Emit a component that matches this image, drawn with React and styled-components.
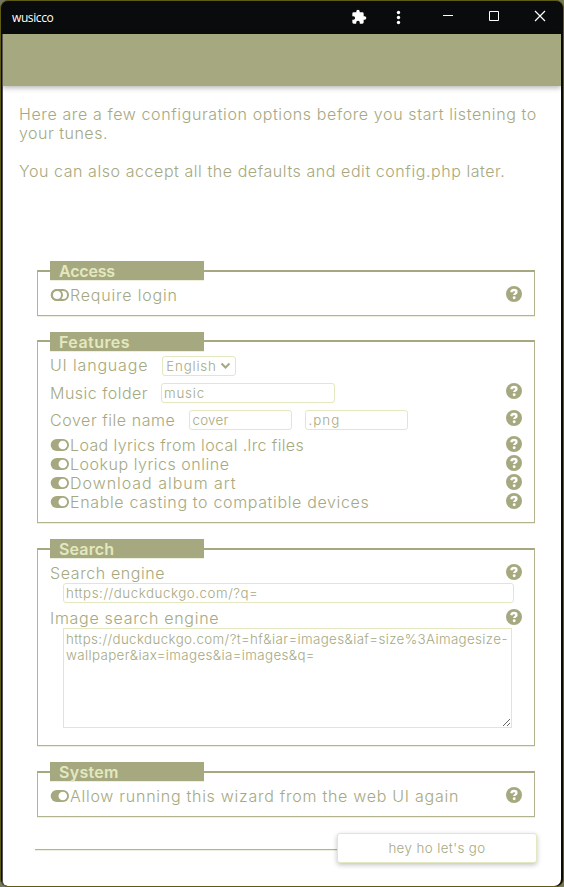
import React from "react";
import styled, { createGlobalStyle } from "styled-components";

const OLIVE = "#a6a97f";
const PALE = "#e4e8c0";

const Global = createGlobalStyle`
  * { box-sizing: border-box; }
  html, body { margin: 0; background: #77795f; overflow: hidden; }
  body, input, select, textarea, button { font-family: Inter, "Open Sans", sans-serif; font-weight: 300; color: ${OLIVE}; }
`;

const Window = styled.div`
  width: 564px;
  height: 887px;
  display: flex;
  flex-direction: column;
  border: 1px solid #5f5a14;
  border-radius: 8px;
  background: #0a0b0d;
  padding: 0 2px 0 1px;
  overflow: hidden;
`;

const TitleBar = styled.header`
  height: 33px;
  flex: none;
  display: flex;
  align-items: center;
  justify-content: space-between;
  padding: 0 11px 0 10px;
  color: #fff;
`;

const AppName = styled.span`
  font: 400 12px "Open Sans", sans-serif;
  letter-spacing: -0.4px;
`;

const WindowControls = styled.div`
  display: grid;
  grid-template-columns: 41px 50px 46px 46px 16px;
  align-items: center;
  margin-top: -2px;
  svg { display: block; }
`;

const Page = styled.main`
  flex: 1;
  min-height: 0;
  background: #fff;
  border-left: 1px solid #515156;
  border-radius: 0 0 7px 5px;
`;

const Banner = styled.div`
  height: 52px;
  margin-left: -1px;
  border-left: 1px solid #55554f;
  background: ${OLIVE};
  box-shadow: 0 2px 5px rgba(0, 0, 0, 0.28);
`;

const Label = styled.span`
  font-size: ${(p) => p.$size || 16}px;
  line-height: 19px;
  letter-spacing: ${(p) => p.$track || 0}px;
  white-space: nowrap;
`;

const Intro = styled.div`
  height: 175px;
  padding: 19px 16px 0;
  display: flex;
  flex-direction: column;
`;

const Gap = styled.div`
  height: ${(p) => p.$height}px;
`;

const Section = styled.section`
  width: 498px;
  height: ${(p) => p.$height}px;
  margin: 0 0 ${(p) => p.$after}px 34px;
  padding: 0 11px 0 12px;
  border: 1px solid #b1b48c;
  border-top: 2px solid ${OLIVE};
  box-shadow: 0 1px 0 #eef0df;
`;

const Legend = styled.h2`
  width: 154px;
  height: 19px;
  margin: -${(p) => p.$rise || 11}px 0 0;
  padding-left: 9px;
  background: ${OLIVE};
  box-shadow: 0 1px 0 #eef0df;
  color: ${PALE};
  font-size: 16px;
  font-weight: 600;
  line-height: 20px;
  letter-spacing: ${(p) => p.$track}px;
`;

const Row = styled.div`
  height: ${(p) => p.$height || 19}px;
  margin-top: ${(p) => p.$before || 0}px;
  display: flex;
  align-items: center;
`;

const Switch = styled.svg`
  width: 20px;
  height: 14px;
  margin-top: -1px;
  flex: none;
`;

const HelpIcon = styled.svg`
  width: 16px;
  height: 16px;
  margin: ${(p) => p.$top}px 1px 0 auto;
  align-self: flex-start;
  flex: none;
`;

const Input = styled.input`
  width: ${(p) => p.$width}px;
  height: 20px;
  margin: 0 0 0 ${(p) => p.$left}px;
  padding: 0 2px;
  border: 1px solid ${PALE};
  border-radius: 3px;
  background: #fff;
  outline: none;
  font-size: 13.333px;
  letter-spacing: ${(p) => p.$track || 0}px;
`;

const Picker = styled.button`
  width: 74px;
  height: 20px;
  margin: 1px 0 0 ${(p) => p.$left}px;
  padding: 1px 4px 0 3px;
  display: flex;
  align-items: center;
  justify-content: space-between;
  border: 1px solid ${PALE};
  border-radius: 3px;
  background: #fff;
`;

const Area = styled.textarea`
  display: block;
  width: 449px;
  height: 100px;
  margin-left: 13px;
  padding: 2px;
  border: 1px solid ${PALE};
  background: #fff;
  outline: none;
  resize: both;
  font-size: 13.333px;
  line-height: 16px;
  letter-spacing: ${(p) => p.$track}px;
`;

const Footer = styled.footer`
  width: 502px;
  height: 30px;
  margin-left: 32px;
  display: flex;
  align-items: center;
`;

const Rule = styled.div`
  flex: 1;
  height: 2px;
  margin-top: 3px;
  border-top: 1px solid #b1b48c;
  background: #eef0df;
`;

const Submit = styled.button`
  width: 200px;
  height: 30px;
  padding: 0;
  border: 1px solid ${PALE};
  border-radius: 3px;
  background: #fff;
  box-shadow: 0 2px 5px rgba(0, 0, 0, 0.24);
`;

function Help({ top = 0 }) {
  return (
    <HelpIcon $top={top} viewBox="0 0 16 16">
      <circle cx="8" cy="8" r="8" fill={OLIVE} />
      <path d="M5.300 6.200C5.600 4.500 6.600 4 8 4c1.500 0 2.500.8 2.500 2 0 1.700-2.300 1.600-2.300 3.100" fill="none" stroke="#fff" strokeWidth="2.300" />
      <circle cx="8.200" cy="11.700" r="1.450" fill="#fff" />
    </HelpIcon>
  );
}

function Toggle({ on }) {
  return (
    <Switch viewBox="0 0 20 14">
      {on ? (
        <>
          <rect x="0.700" y="1" width="18.300" height="12" rx="6" fill={OLIVE} />
          <circle cx="12.800" cy="7" r="4.300" fill="#fff" />
        </>
      ) : (
        <>
          <rect x="1.700" y="2" width="16.300" height="10" rx="5" fill="none" stroke={OLIVE} strokeWidth="2" />
          <circle cx="7" cy="7" r="5" fill="none" stroke={OLIVE} strokeWidth="2" />
        </>
      )}
    </Switch>
  );
}

function Option({ text, on, track, before, height }) {
  return (
    <Row $before={before} $height={height}>
      <Toggle on={on} />
      <Label $track={track}>{text}</Label>
      <Help />
    </Row>
  );
}

export default function App() {
  return (
    <>
      <Global />
      <Window>
        <TitleBar>
          <AppName>wusicco</AppName>
          <WindowControls>
            <svg width="16" height="16" viewBox="0 0 24 24" fill="#fff">
              <path d="M20.500 11H19V7a2 2 0 0 0-2-2h-4V3.500a2.500 2.500 0 0 0-5 0V5H4a2 2 0 0 0-2 2v3.800h1.500a2.700 2.700 0 0 1 0 5.400H2V20a2 2 0 0 0 2 2h3.800v-1.500a2.700 2.700 0 0 1 5.400 0V22H17a2 2 0 0 0 2-2v-4h1.500a2.500 2.500 0 0 0 0-5z" />
            </svg>
            <svg width="14" height="16" fill="#fff">
              <circle cx="6.500" cy="3.500" r="1.700" />
              <circle cx="6.500" cy="8.500" r="1.700" />
              <circle cx="6.500" cy="13.500" r="1.700" />
            </svg>
            <svg width="12" height="12"><path d="M1 4.500h10" stroke="#fff" /></svg>
            <svg width="12" height="15"><path d="M1.500 2.500h9v9h-9z" fill="none" stroke="#fff" /></svg>
            <svg width="12" height="15"><path d="M1 2l10 10M11 2L1 12" stroke="#fff" strokeWidth="1.200" /></svg>
          </WindowControls>
        </TitleBar>
        <Page>
          <Banner />
          <Intro>
            <Label $track={0.61}>Here are a few configuration options before you start listening to</Label>
            <Label $track={0.5}>your tunes.</Label>
            <Gap $height={19} />
            <Label $track={0.56}>You can also accept all the defaults and edit config.php later.</Label>
          </Intro>
          <Gap $height={9} />
          <Section $height={46} $after={24}>
            <Legend $track={-0.2}>Access</Legend>
            <Option text="Require login" track={0.8} before={6} />
          </Section>
          <Section $height={183} $after={25}>
            <Legend $rise={10} $track={0.45}>Features</Legend>
            <Row $before={4} $height={20}>
              <Label $track={0.83}>UI language</Label>
              <Picker $left={14}>
                <Label $size={13.333} $track={0.8}>English</Label>
                <svg width="11" height="8"><path d="M1.500 1.500l4 4 4-4" fill="none" stroke={OLIVE} strokeWidth="2" /></svg>
              </Picker>
            </Row>
            <Row $before={8} $height={20}>
              <Label $track={0.48}>Music folder</Label>
              <Input $width={174} $left={13} $track={0.8} defaultValue="music" />
              <Help />
            </Row>
            <Row $before={7} $height={20}>
              <Label $track={0.55}>Cover file name</Label>
              <Input $width={103} $left={14} $track={0.3} defaultValue="cover" />
              <Input $width={103} $left={13} $track={1.1} defaultValue=".png" />
              <Help />
            </Row>
            <Option on text="Load lyrics from local .lrc files" track={0.38} before={6} />
            <Option on text="Lookup lyrics online" track={0.52} />
            <Option on text="Download album art" track={0.97} />
            <Option on text="Enable casting to compatible devices" track={0.65} />
          </Section>
          <Section $height={198} $after={25}>
            <Legend $track={0.15}>Search</Legend>
            <Row $before={6}><Label $track={0.6}>Search engine</Label><Help /></Row>
            <Row $height={20}><Input $width={451} $left={13} $track={0.54} defaultValue="https://duckduckgo.com/?q=" /></Row>
            <Row $before={6}><Label $track={0.7}>Image search engine</Label><Help /></Row>
            <Area $track={0.38} defaultValue={"https://duckduckgo.com/?t=hf&iar=images&iaf=size%3Aimagesize-\nwallpaper&iax=images&ia=images&q="} spellCheck={false} />
          </Section>
          <Section $height={46} $after={16}>
            <Legend $track={0.3}>System</Legend>
            <Option on text="Allow running this wizard from the web UI again" track={0.73} before={6} />
          </Section>
          <Footer>
            <Rule />
            <Submit><Label $size={13.333} $track={0.4}>hey ho let's go</Label></Submit>
          </Footer>
        </Page>
      </Window>
    </>
  );
}
